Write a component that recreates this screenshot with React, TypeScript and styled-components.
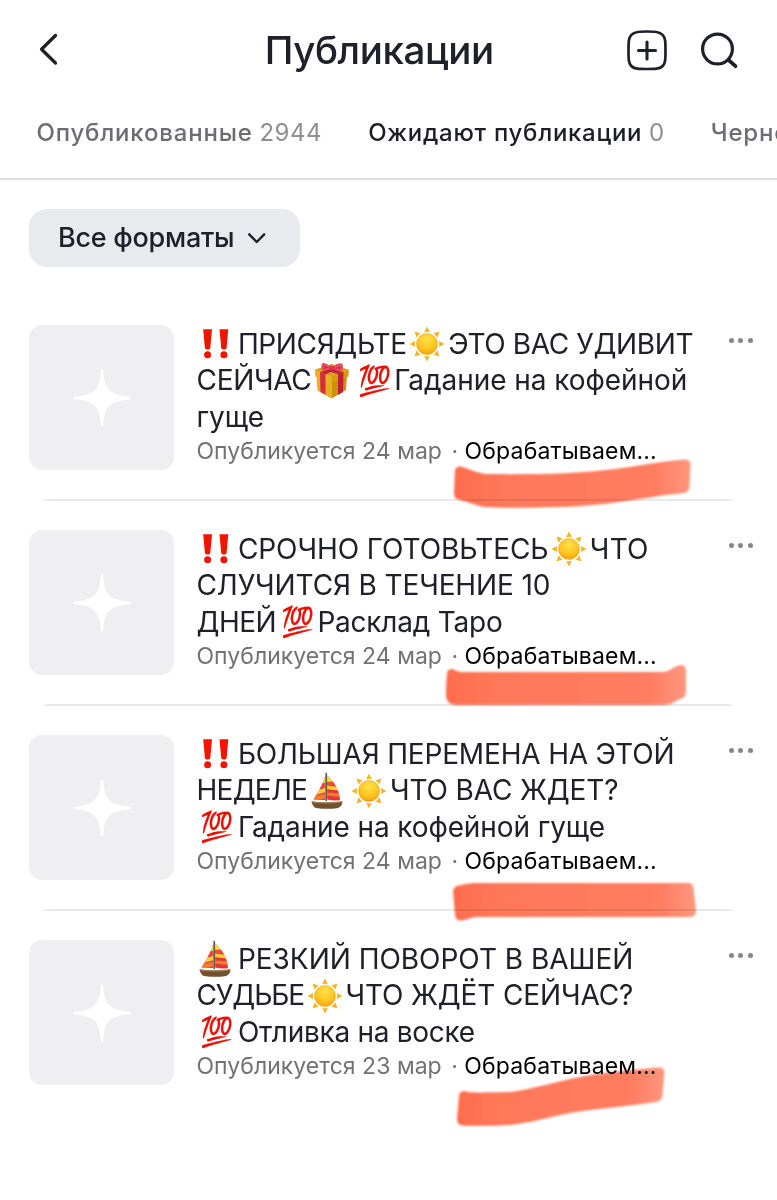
import React from "react";
import styled, { createGlobalStyle } from "styled-components";

const GlobalStyle = createGlobalStyle`
  *, *::before, *::after { box-sizing: border-box; }
  body {
    margin: 0;
    background: #fff;
    color: #20202a;
    font-family: Inter, "Liberation Sans", sans-serif;
    overflow: hidden;
  }
  button { font: inherit; color: inherit; background: none; border: 0; padding: 0; }
`;

const Screen = styled.main`
  width: 777px;
  height: 1200px;
  overflow: hidden;
  background: #fff;
`;

const Header = styled.header`
  display: grid;
  grid-template-columns: 1fr auto 1fr;
  align-items: center;
  height: 100px;
  padding: 0 38.5px 0 37px;
`;

const HeaderTitle = styled.h1`
  margin: 0 17px 0 0;
  padding-bottom: 1px;
  font-size: 38.5px;
  line-height: 48px;
  font-weight: 500;
  letter-spacing: -0.41px;
`;

const IconButton = styled.button`
  display: flex;
`;

const HeaderActions = styled.div`
  display: flex;
  justify-content: flex-end;
  gap: 32px;
`;

const Tabs = styled.nav`
  display: flex;
  gap: 46px;
  height: 80px;
  padding: 17px 0 0 36.5px;
  border-bottom: 2px solid #dddde0;
  overflow: hidden;
  white-space: nowrap;
`;

const Tab = styled.button<{ $active?: boolean }>`
  display: flex;
  flex: none;
  gap: 6.8px;
  height: 32px;
  line-height: 32px;
  font-size: 24px;
  font-weight: 500;
  letter-spacing: ${(p) => (p.$active ? "0.71px" : "0.81px")};
  color: ${(p) => (p.$active ? "#1d1d27" : "#6c6c74")};
`;

const TabCount = styled.span`
  font-weight: 400;
  letter-spacing: 0.56px;
  color: #8f8f91;
`;

const FormatFilter = styled.button`
  display: flex;
  align-items: center;
  gap: 13px;
  width: 271px;
  height: 58px;
  margin: 29px 0 58px 29px;
  padding: 0 0 1px 29px;
  border-radius: 18px;
  background: #e9eaee;
  font-size: 27px;
  font-weight: 500;
  letter-spacing: -0.27px;
`;

const List = styled.ul`
  margin: 0;
  padding: 0;
  list-style: none;
`;

const Row = styled.li`
  position: relative;
  display: grid;
  grid-template-columns: 145px 1fr auto;
  column-gap: 22.5px;
  height: 205px;
  padding: 0 23.5px 0 29px;
`;

const Thumb = styled.div`
  display: flex;
  align-items: center;
  justify-content: center;
  height: 145px;
  border-radius: 13px;
  background: #efeff1;
`;

const Details = styled.div`
  padding-top: 0.75px;
  white-space: nowrap;
`;

const TitleLine = styled.div`
  display: flex;
  align-items: center;
  height: 36.5px;
  font-size: 28px;
  line-height: 36.5px;
`;

const Run = styled.span<{ $track: number }>`
  white-space: pre;
  letter-spacing: ${(p) => p.$track}px;
`;

const EmojiSlot = styled.span`
  display: flex;
  flex: none;
  align-items: center;
  justify-content: center;
  width: 41.4px;
  height: 36px;
  &:first-child { margin: 0 1.4px 0 -1.4px; }
`;

const Hundred = styled.span`
  margin-left: 2px;
  font-family: "Noto Color Emoji", sans-serif;
  font-size: 27px;
  line-height: 36px;
  transform: scale(0.99, 1.1);
  filter: saturate(2.4) brightness(0.92);
`;

const Meta = styled.div`
  display: flex;
  height: 31px;
  margin-top: 1px;
  line-height: 31px;
  font-size: 23px;
  letter-spacing: 0.03px;
  color: #727276;
`;

const Dot = styled.span`
  width: 22.6px;
  padding-left: 3px;
  text-align: center;
`;

const Status = styled.span`
  letter-spacing: 0.16px;
  color: #000;
`;

const MoreButton = styled.button`
  align-self: start;
  display: flex;
  gap: 4.4px;
  padding: 13px 1px 12px;
`;

const MoreDot = styled.i`
  width: 5px;
  height: 5px;
  border-radius: 50%;
  background: #868688;
`;

const Divider = styled.div`
  position: absolute;
  left: 42px;
  right: 43px;
  top: 174px;
  height: 2px;
  border-radius: 10px 10px 0 0 / 2px 2px 0 0;
  background: #e8e8ea;
`;

const Marker = styled.svg`
  position: absolute;
  left: 440px;
  top: 120px;
  mix-blend-mode: multiply;
  pointer-events: none;
`;

function Bangs() {
  return (
    <svg width="36" height="36" viewBox="0 0 36 36" fill="#f01500">
      <path d="M5.2 3.200h8.800l-1.700 18.600q-.2 1.700-1.600 1.700H8.500q-1.400 0-1.600-1.700z" />
      <path d="M21.500 3.200h8.800l-1.700 18.600q-.2 1.700-1.600 1.700h-2.200q-1.400 0-1.600-1.700z" />
      <circle cx="9.600" cy="28.800" r="3.500" />
      <circle cx="25.900" cy="28.800" r="3.500" />
    </svg>
  );
}

function Sun() {
  return (
    <svg width="36" height="36" viewBox="0 0 36 36">
      <defs>
        <radialGradient id="sunDisc" cx=".5" cy=".28" r=".75">
          <stop offset="0" stopColor="#ffe14a" />
          <stop offset=".6" stopColor="#ffc51f" />
          <stop offset="1" stopColor="#f59d12" />
        </radialGradient>
      </defs>
      {[0, 45, 90, 135, 180, 225, 270, 315].map((angle) => (
        <path key={angle} d="M18 .4 20.900 6.200Q18 5.200 15.100 6.200z" fill="#f9b221" transform={`rotate(${angle} 18 18)`} />
      ))}
      <circle cx="18" cy="18" r="10.500" fill="url(#sunDisc)" stroke="#f2a516" strokeWidth=".6" />
    </svg>
  );
}

function Gift() {
  return (
    <svg width="36" height="37" viewBox="0 0 36 37">
      <path d="M2.500 13 17.500 20V36.500L3.500 28.500z" fill="#e9ad1e" />
      <path d="M33 13 17.500 20V36.500L32 28z" fill="#cd8f0c" />
      <path d="M.8 8 17.500 2 34.800 8 34.200 14.500 17.500 21 1.200 14.500z" fill="#eeb325" />
      <path d="M17.500 14.800 34.800 8 34.200 14.500 17.500 21z" fill="#d6990f" />
      <path d="M.8 8 17.500 2 34.800 8 17.500 14.800z" fill="#dba023" />
      <path d="m6 10.300 5.500 2.200v20.300L6.500 30z" fill="#d42e3e" />
      <path d="m24 12.300 5.500-2.300-.5 20-5 3z" fill="#bf2033" />
      <path d="m6 10.300 13-5 5 1.300-12.500 6zM13 5.300l16.500 4.700-5.500 2.300-15.500-5.300z" fill="#c22436" />
      <path d="M16.500 4.600C13 1.300 8.600.2 7.900 1.700c-.8 1.900-.8 4.800.4 7.200 2.700.1 5.700-.8 8.500-2.500h2.600c2.500 1.800 5.400 2.900 8.500 3 1.300-2 1.500-5 .5-7.300-1.500-1.700-6-.4-9.300 2.500z" fill="#e8505c" />
      <path d="m9.500 3.200 5.700 2.400-5.500 1.700zM26.800 3.700l-5.800 2.200 5.500 1.900z" fill="#cf3344" />
      <rect x="15" y="3.700" width="5.600" height="4.400" rx="1.700" fill="#d9374a" />
    </svg>
  );
}

function Boat() {
  return (
    <svg width="36" height="38" viewBox="1 0 36 38">
      <defs>
        <clipPath id="sails"><path d="M16.300 4v24L4.500 27.500C9.500 20 13.800 12 16.300 4zM18.100 3.200C25 9.500 30.500 18 31 28q-6 1.300-12.900-.5z" /></clipPath>
      </defs>
      <g clipPath="url(#sails)">
        <path d="M0 0h36v38H0z" fill="#e9343c" />
        <path d="M17 0h19v9L17 10zM5 9l12-3v4.500L5 14z" fill="#e9e23a" />
        <path d="m17 10 19 1v4l-19-2zM5 13l12-2.500V15L5 18z" fill="#ef4a3d" />
        <path d="m17 13.500 19 2v4L17 17zM3 20l14-4.500V20L3 24z" fill="#fbcf37" />
        <path d="m17 20.500 19 1v4l-19-2zM3 24.500l14-2.700V26L3 29z" fill="#f47c32" />
      </g>
      <path d="M17.200.8V29" stroke="#54473e" strokeWidth="1.400" />
      <path d="M2.500 29.600q13 2.300 31 0-.5 5.300-4.500 6.400-10 1.700-22 0-3.300-1-4.500-6.400z" fill="#76502c" />
      <path d="M2.800 29.800q14 2 30.500 0" stroke="#a5804d" fill="none" strokeWidth="1.300" />
    </svg>
  );
}

function Sparkle() {
  return (
    <svg width="58" height="58" viewBox="0 0 58 58">
      <path
        d="M29 .5c.8 0 1.200.4 1.300 1.300C31.200 18.300 34.500 25.800 56.200 27.700c.9.100 1.300.5 1.300 1.300s-.4 1.200-1.300 1.300C34.500 32.200 31.200 39.700 30.300 56.200c-.1.900-.5 1.300-1.300 1.300s-1.200-.4-1.300-1.300C26.800 39.700 23.500 32.200 1.800 30.300.9 30.200.5 29.800.5 29s.4-1.200 1.300-1.300C23.500 25.800 26.800 18.300 27.700 1.800 27.800.9 28.200.5 29 .5z"
        fill="#fff"
      />
    </svg>
  );
}

type Part = "bangs" | "sun" | "gift" | "hundred" | "boat" | [string, number];

const glyphs: Record<string, React.ReactNode> = {
  bangs: <Bangs />,
  sun: <Sun />,
  gift: <Gift />,
  boat: <Boat />,
  hundred: <Hundred>💯</Hundred>,
};

interface Post {
  lines: Part[][];
  date: string;
  stroke: string;
  originY: number;
}

const posts: Post[] = [
  {
    lines: [
      ["bangs", ["ПРИСЯДЬТЕ", -0.36], "sun", ["ЭТО ВАС УДИВИТ", -0.38]],
      [["СЕЙЧАС", -0.3], "gift", "hundred", ["Гадание на кофейной", -0.06]],
      [["гуще", -0.1]],
    ],
    date: "24 мар",
    originY: 445,
    stroke:
      "M455 470Q456 466 461 466.500 C472 470 478 473.500 488 474 C530 474.500 575 474 610 469.500 C640 466 662 461 684 459.500Q691 459 690.500 465L689.500 487Q689 492 684 493 C650 496 610 506 560 507 C530 508 505 508 484 507 C472 504 465 501 457 499Q454 498 454 493z",
  },
  {
    lines: [
      ["bangs", ["СРОЧНО ГОТОВЬТЕСЬ", -0.08], "sun", ["ЧТО", 0.2]],
      [["СЛУЧИТСЯ В ТЕЧЕНИЕ 10", -0.13]],
      [["ДНЕЙ", -0.55], "hundred", ["Расклад Таро", -0.22]],
    ],
    date: "24 мар",
    originY: 650,
    stroke:
      "M447 674Q447 669 452 669C456 670 458 672 463 672L663 672 C671 671.500 673 666 681 665Q686 665 686 671L686 691Q686 698 680 699 C675 701 672 705 664 705L456 705Q447 704 446 697 C446 690 446 682 447 674z",
  },
  {
    lines: [
      ["bangs", ["БОЛЬШАЯ ПЕРЕМЕНА НА ЭТОЙ", -0.17]],
      [["НЕДЕЛЕ", -0.75], "boat", "sun", ["ЧТО ВАС ЖДЕТ?", -0.14]],
      ["hundred", ["Гадание на кофейной гуще", -0.11]],
    ],
    date: "24 мар",
    originY: 855,
    stroke:
      "M453 891Q454 886 459 885.500 C466 884 469 883 476 883L688 883Q693 883 693.500 888L696 910Q696 917 691 917L478 917 C470 917 467 920 461 920.500Q456 921 455 915z",
  },
  {
    lines: [
      ["boat", ["РЕЗКИЙ ПОВОРОТ В ВАШЕЙ", -0.02]],
      [["СУДЬБЕ", -1.1], "sun", ["ЧТО ЖДЁТ СЕЙЧАС?", -0.12]],
      ["hundred", ["Отливка на воске", -0.27]],
    ],
    date: "23 мар",
    originY: 1060,
    stroke:
      "M459 1095Q460 1091 465 1091 C470 1093 475 1092.500 510 1092 C540 1088 565 1078 605 1073 C625 1071 640 1069 658 1067.500Q665 1067 664.500 1073L662.500 1095Q662 1101 656 1102 C630 1106 600 1108 570 1113 C550 1117 530 1123 510 1125 C492 1126 480 1126 463 1125.500Q457 1125 457 1119z",
  },
];

export default function App() {
  return (
    <Screen>
      <GlobalStyle />
      <Header>
        <IconButton aria-label="Назад">
          <svg width="24" height="34" viewBox="0 0 24 34" fill="none" stroke="#20202a" strokeWidth="3.300" strokeLinecap="round" strokeLinejoin="round">
            <path d="M18.500 2.500 4.500 16.200 18.500 30" />
          </svg>
        </IconButton>
        <HeaderTitle>Публикации</HeaderTitle>
        <HeaderActions>
          <IconButton aria-label="Создать">
            <svg width="42" height="42" viewBox="0 0 42 42" fill="none" stroke="#20202a" strokeLinecap="round">
              <path d="M21 2.500C25 2.500 28 2.500 30.500 3C35.500 3.800 38.700 7 39.200 12C39.500 15 39.500 18 39.500 21.500S39.500 28 39.200 31C38.700 36 35.500 39.200 30.500 39.700C28 40 25 40 21 40S14 40 11.500 39.700C6.500 39.200 3.300 36 2.800 31C2.500 28 2.500 25 2.500 21.500S2.500 15 2.800 12C3.300 7 6.500 3.800 11.500 3C14 2.500 17 2.500 21 2.500z" strokeWidth="2.700" />
              <path d="M21 13v17M12.500 21.500h17" strokeWidth="3.100" />
            </svg>
          </IconButton>
          <IconButton aria-label="Поиск">
            <svg width="39" height="42" viewBox="0 0 39 42" fill="none" stroke="#20202a" strokeWidth="3.200" strokeLinecap="round">
              <circle cx="17.500" cy="20" r="14.900" />
              <path d="m28.500 31 7 6.200" strokeWidth="3.700" />
            </svg>
          </IconButton>
        </HeaderActions>
      </Header>
      <Tabs>
        <Tab>Опубликованные<TabCount>2944</TabCount></Tab>
        <Tab $active>Ожидают публикации<TabCount>0</TabCount></Tab>
        <Tab>Черновики</Tab>
      </Tabs>
      <FormatFilter>
        Все форматы
        <svg width="20" height="14" viewBox="0 0 20 14" fill="none" stroke="#20202a" strokeWidth="2.400" strokeLinecap="round" strokeLinejoin="round">
          <path d="m2.200 3.300 7.500 7.700L17.200 3.300" />
        </svg>
      </FormatFilter>
      <List>
        {posts.map((post, index) => (
          <Row key={index}>
            <Thumb><Sparkle /></Thumb>
            <Details>
              {post.lines.map((line, lineIndex) => (
                <TitleLine key={lineIndex}>
                  {line.map((part, partIndex) =>
                    typeof part === "string" ? (
                      <EmojiSlot key={partIndex}>{glyphs[part]}</EmojiSlot>
                    ) : (
                      <Run key={partIndex} $track={part[1]}>{part[0]}</Run>
                    )
                  )}
                </TitleLine>
              ))}
              <Meta>
                <span>Опубликуется {post.date}</span>
                <Dot>·</Dot>
                <Status>Обрабатываем...</Status>
              </Meta>
            </Details>
            <MoreButton aria-label="Ещё"><MoreDot /><MoreDot /><MoreDot /></MoreButton>
            {index < posts.length - 1 && <Divider />}
            <Marker width="270" height="90" viewBox={`440 ${post.originY} 270 90`}>
              <defs>
                <linearGradient id={`ink${index}`}>
                  <stop offset="0" stopColor="#ff6c4c" />
                  <stop offset=".2" stopColor="#ff7859" />
                  <stop offset=".85" stopColor="#ff7d61" />
                  <stop offset="1" stopColor="#ff977e" />
                </linearGradient>
                <filter id={`soft${index}`}><feGaussianBlur stdDeviation=".8" /></filter>
              </defs>
              <path d={post.stroke} fill={`url(#ink${index})`} filter={`url(#soft${index})`} />
            </Marker>
          </Row>
        ))}
      </List>
    </Screen>
  );
}
